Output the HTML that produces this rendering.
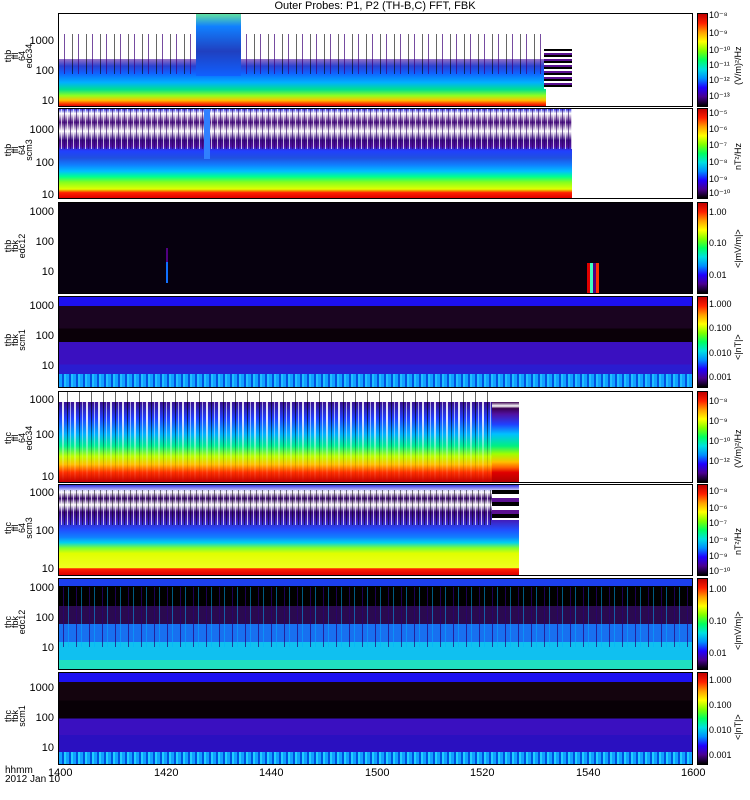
<!DOCTYPE html>
<html><head><meta charset="utf-8"><style>
body{margin:0;width:750px;height:800px;background:#fff;position:relative;overflow:hidden;font-family:"Liberation Sans",sans-serif;font-size:11px;color:#000}
.p{position:absolute;left:58px;width:633px;border:1px solid #000;box-sizing:content-box;overflow:hidden;background:#fff}
.l{position:absolute;font-size:11px;text-align:right;width:50px;left:4px;line-height:11px}
.t{position:absolute;transform:rotate(-90deg);transform-origin:left top;font-size:9px;line-height:7px;text-align:center;width:60px}
.cb{position:absolute;left:697px;width:9px;background:linear-gradient(to top,#000,#4a0090,#2000ff,#0090ff,#00e0e0,#00ff60,#80ff00,#ffff00,#ffa000,#ff2000,#c00000);border:1px solid #000}
.cl{position:absolute;left:709px;font-size:9px}
.u{position:absolute;transform:rotate(-90deg);transform-origin:left top;font-size:9px;white-space:nowrap}
.x{position:absolute;top:767px;font-size:11px}
.s{position:absolute;}
</style></head><body>
<div style="position:absolute;top:0;left:0;width:750px;text-align:center;font-size:11px;line-height:12px">Outer Probes: P1, P2 (TH-B,C) FFT, FBK</div>

<!-- P1 -->
<div class="p" style="top:13px;height:92px">
 <div class="s" style="left:0;width:487px;top:45px;height:47px;background:linear-gradient(to bottom,rgba(80,20,160,.6),#2a40d0 15%,#1060ff 30%,#00b0ff 50%,#00e090 65%,#90ff20 78%,#ffc000 88%,#ff5000 94%,#e00000)"></div>
 <div class="s" style="left:0;width:487px;top:20px;height:40px;background:repeating-linear-gradient(90deg,transparent 0 5px,rgba(60,0,120,.7) 5px 6px,transparent 6px 13px,rgba(0,0,0,.6) 13px 14px)"></div>
 <div class="s" style="left:137px;width:45px;top:0;height:62px;background:linear-gradient(#60e0a0,#1080ff 20%,#2040c0 60%,#1060ff)"></div>
 <div class="s" style="left:485px;width:28px;top:35px;height:40px;background:repeating-linear-gradient(#000 0 2px,#fff 2px 4px,#5a1090 4px 6px)"></div>
</div>
<div class="l" style="top:36px">1000</div><div class="l" style="top:66px">100</div><div class="l" style="top:96px">10</div>
<div class="t" style="left:5px;top:86px">thb<br>ffl<br>64<br>edc34</div>
<div class="cb" style="top:13px;height:92px"></div>
<div class="cl" style="top:10px">10⁻⁸</div><div class="cl" style="top:28px">10⁻⁹</div><div class="cl" style="top:45px">10⁻¹⁰</div><div class="cl" style="top:60px">10⁻¹¹</div><div class="cl" style="top:75px">10⁻¹²</div><div class="cl" style="top:91px">10⁻¹³</div>
<div class="u" style="left:733px;top:85px">(V/m)²/Hz</div>

<!-- P2 -->
<div class="p" style="top:108px;height:89px">
 <div class="s" style="left:0;width:513px;top:0;height:89px;background:linear-gradient(#3030e0 0%,#fff 5%,#4a1080 15%,#fff 25%,#3a0a80 35%,#5010a0 42%,#2040ff 47%,#2050e0 55%,#1080ff 63%,#00c0ff 70%,#00ff90 76%,#80ff20 82%,#e0ff00 90%,#ff2000 94%,#e00000)"></div>
 <div class="s" style="left:0;width:513px;top:0;height:40px;background:repeating-linear-gradient(90deg,transparent 0 2px,rgba(255,255,255,.7) 2px 3px,transparent 3px 5px,rgba(40,0,100,.6) 5px 6px)"></div>
 <div class="s" style="left:145px;width:6px;top:0;height:50px;background:#3080ff"></div>
</div>
<div class="l" style="top:125px">1000</div><div class="l" style="top:158px">100</div><div class="l" style="top:190px">10</div>
<div class="t" style="left:5px;top:180px">thb<br>ffl<br>64<br>scm3</div>
<div class="cb" style="top:108px;height:89px"></div>
<div class="cl" style="top:108px">10⁻⁵</div><div class="cl" style="top:124px">10⁻⁶</div><div class="cl" style="top:140px">10⁻⁷</div><div class="cl" style="top:157px">10⁻⁸</div><div class="cl" style="top:174px">10⁻⁹</div><div class="cl" style="top:188px">10⁻¹⁰</div>
<div class="u" style="left:733px;top:170px">nT²/Hz</div>

<!-- P3 -->
<div class="p" style="top:202px;height:90px;background:#06000e">
 <div class="s" style="left:107px;width:2px;top:45px;height:35px;background:linear-gradient(#500080 40%,#1070ff 40%)"></div>
 <div class="s" style="left:528px;width:12px;top:60px;height:30px;background:linear-gradient(90deg,#e00000 0 3px,#40ffc0 3px 6px,#500080 6px 9px,#ff3000 9px)"></div>
</div>
<div class="l" style="top:207px">1000</div><div class="l" style="top:237px">100</div><div class="l" style="top:267px">10</div>
<div class="t" style="left:5px;top:276px">thb<br>fbk<br>edc12</div>
<div class="cb" style="top:202px;height:90px"></div>
<div class="cl" style="top:207px">1.00</div><div class="cl" style="top:238px">0.10</div><div class="cl" style="top:270px">0.01</div>
<div class="u" style="left:733px;top:268px">&lt;|mV/m|&gt;</div>

<!-- P4 -->
<div class="p" style="top:296px;height:90px;background:linear-gradient(#1c10f0 0 10%,#1a0420 10% 35%,#0a0008 35% 50%,#3a10c0 50% 75%,#2a1cd0 75% 88%,#0880f0 88%)">
 <div class="s" style="left:0;width:633px;top:77px;height:13px;background:repeating-linear-gradient(90deg,#10a0ff 0 3px,#0050e0 3px 5px,#20c0ff 5px 7px)"></div>
</div>
<div class="l" style="top:301px">1000</div><div class="l" style="top:331px">100</div><div class="l" style="top:361px">10</div>
<div class="t" style="left:5px;top:370px">thb<br>fbk<br>scm1</div>
<div class="cb" style="top:296px;height:90px"></div>
<div class="cl" style="top:299px">1.000</div><div class="cl" style="top:323px">0.100</div><div class="cl" style="top:348px">0.010</div><div class="cl" style="top:372px">0.001</div>
<div class="u" style="left:733px;top:360px">&lt;|nT|&gt;</div>

<!-- P5 -->
<div class="p" style="top:391px;height:90px">
 <div class="s" style="left:0;width:433px;top:10px;height:80px;background:linear-gradient(#3a1090,#2040ff 20%,#00b0ff 40%,#00f090 55%,#c0ff00 68%,#ffc000 78%,#ff3000 88%,#c00000)"></div>
 <div class="s" style="left:0;width:433px;top:0;height:90px;background:repeating-linear-gradient(90deg,transparent 0 3px,rgba(255,255,255,.85) 3px 5px,transparent 5px 8px,rgba(0,0,0,.6) 8px 9px,transparent 9px 11px,rgba(255,255,255,.6) 11px 12px);-webkit-mask:linear-gradient(#000 30%,rgba(0,0,0,.3) 70%,transparent)"></div>
 <div class="s" style="left:433px;width:27px;top:10px;height:80px;background:linear-gradient(#3a0050,#fff 5%,#3a0050 8%,#5010a0 15%,#2040ff 28%,#00c0ff 40%,#00f080 55%,#a0ff00 65%,#ffc000 75%,#ff6000 82%,#e00000 88%,#b00000)"></div>
</div>
<div class="l" style="top:395px">1000</div><div class="l" style="top:430px">100</div><div class="l" style="top:472px">10</div>
<div class="t" style="left:5px;top:468px">thc<br>ffl<br>64<br>edc34</div>
<div class="cb" style="top:391px;height:90px"></div>
<div class="cl" style="top:396px">10⁻⁸</div><div class="cl" style="top:416px">10⁻⁹</div><div class="cl" style="top:436px">10⁻¹⁰</div><div class="cl" style="top:456px">10⁻¹²</div>
<div class="u" style="left:733px;top:468px">(V/m)²/Hz</div>

<!-- P6 -->
<div class="p" style="top:484px;height:90px">
 <div class="s" style="left:0;width:460px;top:0;height:90px;background:linear-gradient(#3030e0 0%,#fff 8%,#3a0a70 15%,#fff 22%,#3a0a80 30%,#4020c0 40%,#2050ff 50%,#1080ff 58%,#00d0f0 64%,#80ff30 70%,#e0ff00 76%,#f0ff20 92%,#ff2000 93%,#e00000)"></div>
 <div class="s" style="left:0;width:433px;top:5px;height:35px;background:repeating-linear-gradient(90deg,transparent 0 2px,rgba(255,255,255,.7) 2px 3px,transparent 3px 5px,rgba(0,0,0,.5) 5px 6px)"></div>
 <div class="s" style="left:433px;width:27px;top:5px;height:30px;background:repeating-linear-gradient(#000 0 4px,#fff 4px 8px,#5a1090 8px 12px)"></div>
</div>
<div class="l" style="top:488px">1000</div><div class="l" style="top:526px">100</div><div class="l" style="top:564px">10</div>
<div class="t" style="left:5px;top:558px">thc<br>ffl<br>64<br>scm3</div>
<div class="cb" style="top:484px;height:90px"></div>
<div class="cl" style="top:486px">10⁻⁸</div><div class="cl" style="top:503px">10⁻⁶</div><div class="cl" style="top:518px">10⁻⁷</div><div class="cl" style="top:535px">10⁻⁸</div><div class="cl" style="top:551px">10⁻⁹</div><div class="cl" style="top:566px">10⁻¹⁰</div>
<div class="u" style="left:733px;top:555px">nT²/Hz</div>

<!-- P7 -->
<div class="p" style="top:578px;height:90px;background:linear-gradient(#1c40f0 0 8%,#000 8% 30%,#2a0a50 30% 50%,#1870f0 50% 70%,#10c0f0 70% 90%,#20e0c0 90%)">
 <div class="s" style="left:0;width:633px;top:8px;height:60px;background:repeating-linear-gradient(90deg,transparent 0 4px,rgba(40,0,120,.7) 4px 5px,transparent 5px 9px,rgba(0,180,255,.5) 9px 10px,transparent 10px 13px)"></div>
</div>
<div class="l" style="top:583px">1000</div><div class="l" style="top:613px">100</div><div class="l" style="top:643px">10</div>
<div class="t" style="left:5px;top:652px">thc<br>fbk<br>edc12</div>
<div class="cb" style="top:578px;height:90px"></div>
<div class="cl" style="top:584px">1.00</div><div class="cl" style="top:616px">0.10</div><div class="cl" style="top:648px">0.01</div>
<div class="u" style="left:733px;top:650px">&lt;|mV/m|&gt;</div>

<!-- P8 -->
<div class="p" style="top:672px;height:91px;background:linear-gradient(#1c10f0 0 10%,#14040e 10% 30%,#080006 30% 50%,#3a10c0 50% 68%,#2a10c0 68% 87%,#0880f0 87%)">
 <div class="s" style="left:0;width:633px;top:79px;height:12px;background:repeating-linear-gradient(90deg,#10a0ff 0 3px,#0050e0 3px 5px,#20d0ff 5px 7px)"></div>
</div>
<div class="l" style="top:683px">1000</div><div class="l" style="top:713px">100</div><div class="l" style="top:743px">10</div>
<div class="t" style="left:5px;top:746px">thc<br>fbk<br>scm1</div>
<div class="cb" style="top:672px;height:91px"></div>
<div class="cl" style="top:675px">1.000</div><div class="cl" style="top:700px">0.100</div><div class="cl" style="top:725px">0.010</div><div class="cl" style="top:750px">0.001</div>
<div class="u" style="left:733px;top:740px">&lt;|nT|&gt;</div>

<div style="position:absolute;left:5px;top:766px;font-size:10px;line-height:9px">hhmm<br>2012 Jan 10</div>
<div class="x" style="left:48px">1400</div><div class="x" style="left:154px">1420</div><div class="x" style="left:259px">1440</div><div class="x" style="left:365px">1500</div><div class="x" style="left:470px">1520</div><div class="x" style="left:576px">1540</div><div class="x" style="left:681px">1600</div>
</body></html>
